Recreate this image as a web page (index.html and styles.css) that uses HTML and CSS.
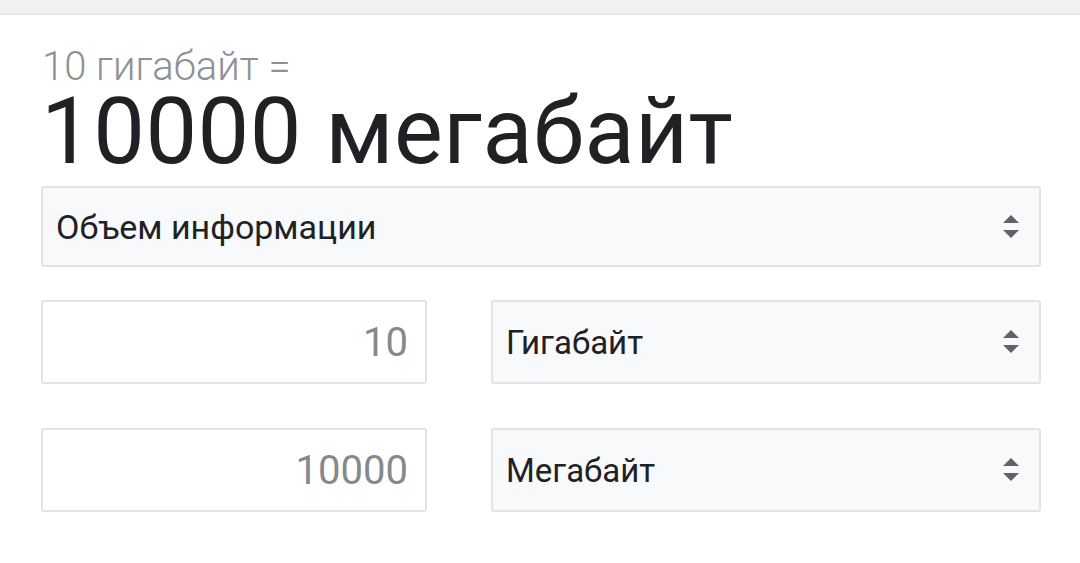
FILE: index.html
```html
<!DOCTYPE html>
<html lang="ru">
<head>
  <meta charset="UTF-8">
  <title>Конвертер величин</title>
  <meta name="viewport" content="width=device-width, initial-scale=1.0">
  <link rel="stylesheet" href="styles.css">
</head>
<body>
  <div class="topbar"></div>

  <div class="converter">
    <div class="summary">10 гигабайт =</div>
    <div class="result">10000 мегабайт</div>

    <div class="select select-wide">
      <span>Объем информации</span>
      <svg class="arrows" width="16" height="24" viewBox="0 0 16 24">
        <polygon points="0,8 8,0 16,8" />
        <polygon points="0,15 16,15 8,23" />
      </svg>
    </div>

    <div class="row">
      <div class="field">10</div>
      <div class="select">
        <span>Гигабайт</span>
        <svg class="arrows" width="16" height="24" viewBox="0 0 16 24">
          <polygon points="0,8 8,0 16,8" />
          <polygon points="0,15 16,15 8,23" />
        </svg>
      </div>
    </div>

    <div class="row">
      <div class="field">10000</div>
      <div class="select">
        <span>Мегабайт</span>
        <svg class="arrows" width="16" height="24" viewBox="0 0 16 24">
          <polygon points="0,8 8,0 16,8" />
          <polygon points="0,15 16,15 8,23" />
        </svg>
      </div>
    </div>
  </div>
</body>
</html>
```

FILE: styles.css
```css
body {
  margin: 0;
  padding: 0;
  background: #fff;
  font-family: Roboto, "Liberation Sans", sans-serif;
  color: #202124;
}
.topbar {
  height: 13px;
  background: #f0f1f3;
  border-bottom: 2px solid #e6e7ea;
}
.converter {
  width: 1000px;
  margin-left: 41px;
}
.summary {
  margin-top: 33px;
  font-size: 40px;
  font-weight: 300;
  line-height: 38px;
  color: #8d9096;
  padding-left: 1px;
}
.result {
  font-size: 92px;
  line-height: 92px;
  color: #202124;
  letter-spacing: 0.5px;
}
.select {
  display: flex;
  align-items: center;
  justify-content: space-between;
  box-sizing: border-box;
  height: 81px;
  padding: 0 20px 0 13px;
  background: #f8f9fa;
  border: 2px solid #e2e3e5;
  border-radius: 3px;
  font-size: 33px;
  color: #202124;
}
.select-wide {
  margin-top: 8px;
  font-size: 34px;
}
.arrows {
  fill: #5f6368;
}
.row {
  display: grid;
  grid-template-columns: 386px 550px;
  column-gap: 64px;
  margin-top: 33px;
}
.row + .row {
  margin-top: 44px;
}
.row .select {
  height: 84px;
}
.field {
  box-sizing: border-box;
  height: 84px;
  padding-right: 17px;
  display: flex;
  align-items: center;
  justify-content: flex-end;
  border: 2px solid #e2e3e5;
  border-radius: 3px;
  font-size: 40px;
  color: #85888c;
}
```
